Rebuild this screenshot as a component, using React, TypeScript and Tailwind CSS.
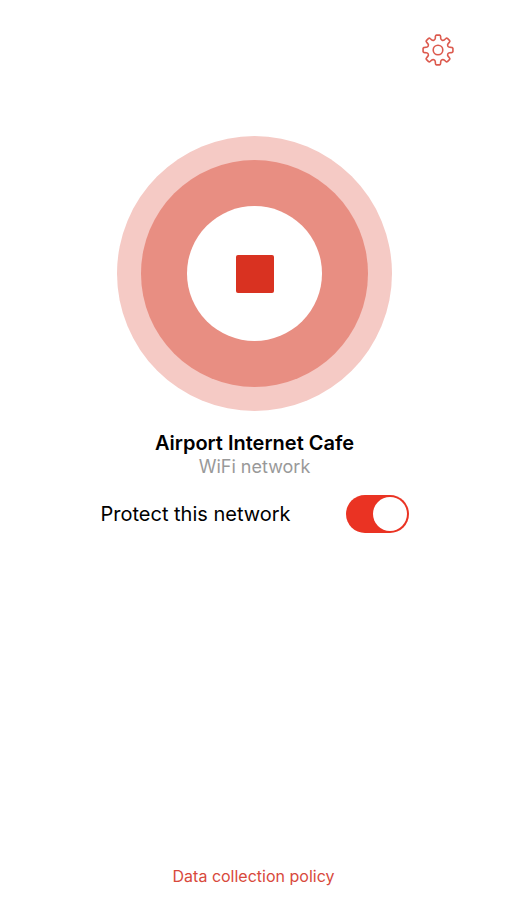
import { useState } from "react";

const point = (radius: number, degrees: number) => {
  const angle = (degrees * Math.PI) / 180;
  return `${(radius * Math.sin(angle)).toFixed(2)} ${(-radius * Math.cos(angle)).toFixed(2)}`;
};

// Eight rounded teeth joined by curved valleys.
const gearPath =
  [0, 45, 90, 135, 180, 225, 270, 315]
    .map(
      (a, i) =>
        `${i === 0 ? "M" : "L"}${point(12, a - 13)} L${point(13.6, a - 11)} Q${point(15, a - 10)} ${point(15, a - 6)} L${point(15, a + 6)} Q${point(15, a + 10)} ${point(13.6, a + 11)} L${point(12, a + 13)} C${point(10.2, a + 16)} ${point(10.2, a + 29)} ${point(12, a + 32)}`,
    )
    .join(" ") + " Z";

function GearIcon() {
  return (
    <svg
      viewBox="-16 -16 32 32"
      className="size-8"
      fill="none"
      stroke="currentColor"
      strokeWidth="1.6"
      strokeLinejoin="round"
      aria-hidden="true"
    >
      <path d={gearPath} />
      <circle r="4.8" />
    </svg>
  );
}

export default function App() {
  const [running, setRunning] = useState(true);
  const [isProtected, setIsProtected] = useState(true);

  return (
    <div className="flex min-h-screen flex-col bg-white font-['Inter','Liberation_Sans',sans-serif] text-black">
      <header className="flex justify-end px-[53px] pt-[34px]">
        <button type="button" aria-label="Settings" className="text-[#dc5a4e]">
          <GearIcon />
        </button>
      </header>

      <main className="flex flex-1 flex-col items-center pt-[70px] pl-0.5">
        <button
          type="button"
          aria-label={running ? "Stop" : "Start"}
          onClick={() => setRunning(!running)}
          className="rounded-full bg-[#f5cac5] p-6"
        >
          <span className="block rounded-full bg-[#e88e82] p-[46px]">
            <span className="flex size-[135px] items-center justify-center rounded-full bg-white">
              <span className={`size-[38px] bg-[#d93221] ${running ? "rounded-xs" : "rounded-full"}`} />
            </span>
          </span>
        </button>

        <h1 className="mt-5 text-xl leading-6 font-semibold">Airport Internet Cafe</h1>
        <p className="text-lg leading-6 text-[#999999]">WiFi network</p>

        <label className="mt-4 flex w-full max-w-[308px] cursor-pointer items-center justify-between text-xl">
          Protect this network
          <input
            type="checkbox"
            role="switch"
            checked={isProtected}
            onChange={(e) => setIsProtected(e.target.checked)}
            className="h-[38px] w-[63px] cursor-pointer appearance-none rounded-full bg-gray-300 p-0.5 before:block before:size-[34px] before:rounded-full before:bg-white checked:bg-[#ea3323] checked:before:ml-auto"
          />
        </label>
      </main>

      <footer className="flex justify-center pb-3">
        <a href="#policy" className="text-base leading-6 text-[#d8493c]">
          Data collection policy
        </a>
      </footer>
    </div>
  );
}
